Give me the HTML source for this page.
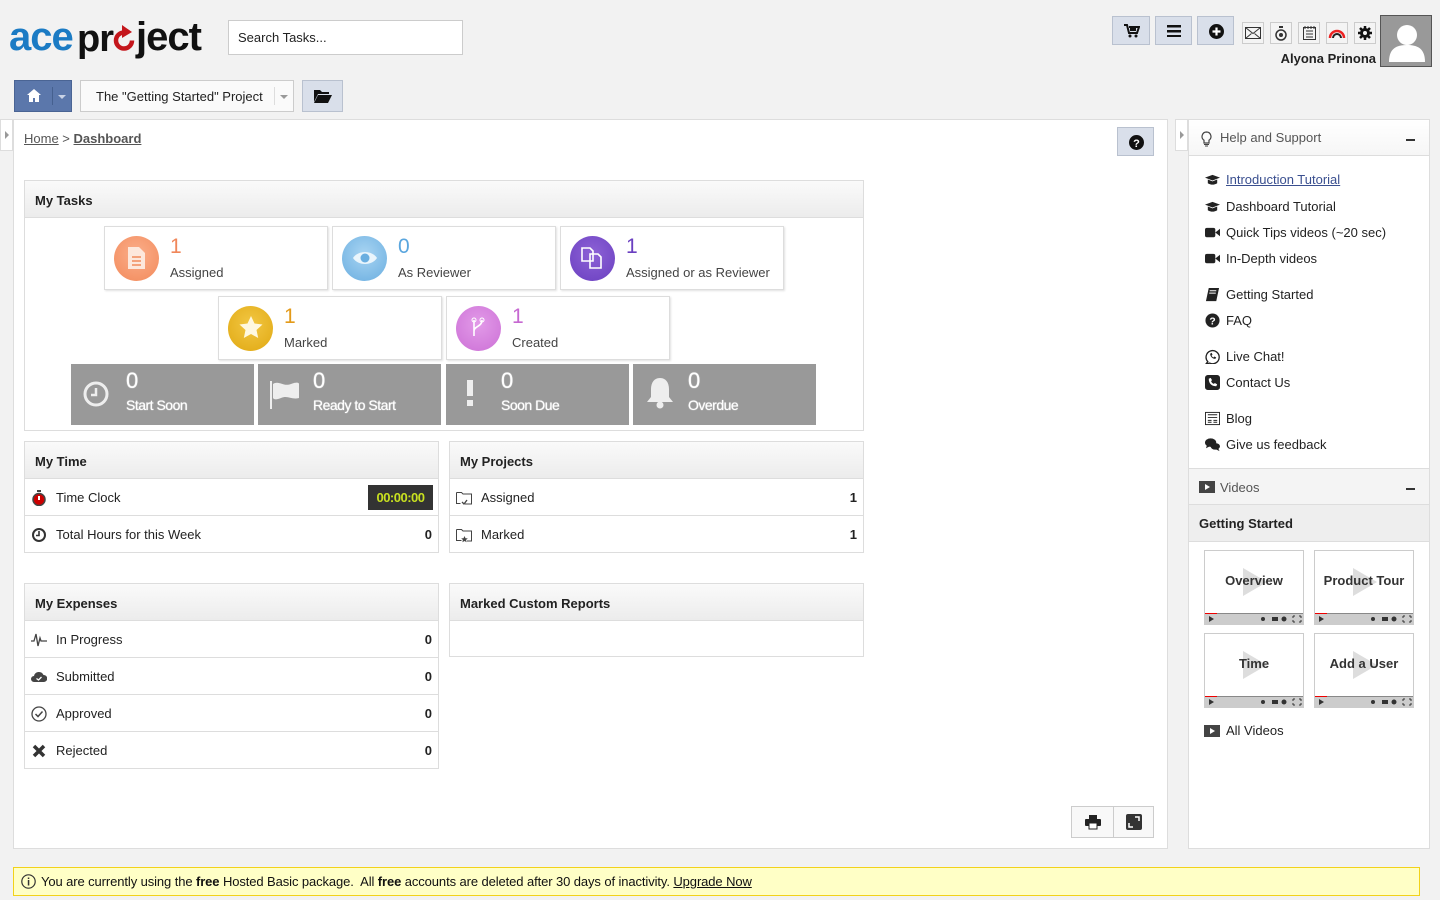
<!DOCTYPE html>
<html><head><meta charset="utf-8">
<style>
*{box-sizing:border-box;margin:0;padding:0}
body{width:1440px;height:900px;background:#f2f2f2;font-family:"Liberation Sans",Arial,sans-serif;font-size:13px;color:#222;position:relative;overflow:hidden}
.a{position:absolute}
.btn{position:absolute;background:#d9dfea;border:1px solid #b9c1cf}
.ib{position:absolute;background:#f4f4f4;border:1px solid #ccc;width:22px;height:22px;display:flex;align-items:center;justify-content:center}
.panel{position:absolute;background:#fff;border:1px solid #ddd}
.ph{height:37px;background:linear-gradient(#fafafa,#ececec);border-bottom:1px solid #ddd;font-weight:bold;font-size:13px;padding:12px 10px;color:#222}
.row{height:37px;border-bottom:1px solid #ddd;position:relative;display:flex;align-items:center;padding-left:31px}
.row:last-child{border-bottom:none}
.row .ic{position:absolute;left:6px;top:11px;width:16px;height:16px}
.row .v{position:absolute;right:6px;font-weight:bold}
.card{position:absolute;width:224px;height:64px;background:#fff;border:1px solid #ddd;box-shadow:1px 1px 2px rgba(0,0,0,.12)}
.card .c{position:absolute;left:9px;top:9px;width:45px;height:45px;border-radius:50%}
.card .n{position:absolute;left:65px;top:8px;font-size:21px}
.card .l{position:absolute;left:65px;top:38px;color:#444}
.gc{position:absolute;width:183px;height:61px;background:#999;color:#fff}
.gc .n{position:absolute;left:55px;top:4px;font-size:22px;text-shadow:0 0 1px #fff}
.gc .l{position:absolute;left:55px;top:33px;font-size:14px;letter-spacing:-.5px;text-shadow:0 0 1px #fff}
.hl{position:absolute;left:16px;display:flex;align-items:center;gap:6px}
.hl svg{width:15px;height:15px}
.vid{position:absolute;width:100px;height:75px;border:1px solid #ccc;background:#fff}
.vid .t{position:absolute;left:0;right:0;top:22px;text-align:center;font-weight:bold;font-size:13px;color:#333}
.vid .pl{position:absolute;left:38px;top:17px;width:0;height:0;border-left:24px solid #ddd;border-top:14px solid transparent;border-bottom:14px solid transparent}
.vid .bar{position:absolute;left:0;right:0;bottom:0;height:11px;background:#ccc;border-top:1px solid #888}
.vid .bar:before{content:"";position:absolute;left:0;top:-1px;width:12px;height:1px;background:#e00}
.vid .bar svg{position:absolute;left:0;top:0}
.lg{position:absolute;font-weight:bold;line-height:48px;letter-spacing:-1px}
</style></head><body>

<!-- logo -->
<div class="lg" style="left:9px;top:13px;font-size:40px;color:#1b7bc4">ace</div>
<div class="lg" style="left:77px;top:15px;font-size:38px;color:#111">pr</div>
<svg class="a" style="left:111px;top:20px" width="28" height="32" viewBox="0 0 28 32"><path d="M13 12.5A8 8 0 1 0 21 20.5" fill="none" stroke="#c4161c" stroke-width="4.5"/><path d="M11 5l10 7-10 6z" fill="#c4161c"/></svg>
<div class="lg" style="left:136px;top:13px;font-size:40px;color:#111">ject</div>

<div class="a" style="left:228px;top:20px;width:235px;height:35px;background:#fff;border:1px solid #ccc;padding:9px 9px;font-size:13px;color:#222">Search Tasks...</div>

<!-- top right -->
<div class="btn" style="left:1112px;top:16px;width:38px;height:29px"><svg class="a" style="left:11px;top:7px" width="16" height="14" viewBox="0 0 16 14"><path d="M0 1h3l2 8h8l2-6H5" fill="none" stroke="#111" stroke-width="2"/><rect x="6" y="3" width="6" height="4" fill="#111"/><circle cx="6" cy="12" r="1.5" fill="#111"/><circle cx="12" cy="12" r="1.5" fill="#111"/></svg></div>
<div class="btn" style="left:1155px;top:16px;width:37px;height:29px"><svg class="a" style="left:11px;top:8px" width="14" height="12"><rect y="0" width="14" height="2.5" fill="#111"/><rect y="5" width="14" height="2.5" fill="#111"/><rect y="10" width="14" height="2.5" fill="#111"/></svg></div>
<div class="btn" style="left:1197px;top:16px;width:37px;height:29px"><svg class="a" style="left:11px;top:7px" width="15" height="15"><circle cx="7.5" cy="7.5" r="7.5" fill="#111"/><path d="M7.5 3.5v8M3.5 7.5h8" stroke="#fff" stroke-width="2.2"/></svg></div>
<div class="ib" style="left:1242px;top:22px"><svg width="16" height="12"><rect x=".5" y=".5" width="15" height="11" fill="none" stroke="#333"/><path d="M.5 .5l7.5 6 7.5-6M.5 11.5l6-5M15.5 11.5l-6-5" fill="none" stroke="#333"/></svg></div>
<div class="ib" style="left:1270px;top:22px"><svg width="12" height="15"><circle cx="6" cy="9" r="5" fill="none" stroke="#333" stroke-width="1.5"/><rect x="4" y="0" width="4" height="2" fill="#333"/><circle cx="6" cy="9" r="2" fill="#333"/></svg></div>
<div class="ib" style="left:1298px;top:22px"><svg width="13" height="14"><rect x=".5" y="1.5" width="12" height="12" fill="none" stroke="#333"/><path d="M3 5h7M3 8h7M3 11h7M2 0v3M5 0v3M8 0v3M11 0v3" stroke="#333"/></svg></div>
<div class="ib" style="left:1326px;top:22px"><svg width="18" height="10"><path d="M2 10a7 7 0 0 1 14 0" fill="none" stroke="#e22" stroke-width="2.5"/><path d="M5 10a4 4 0 0 1 8 0" fill="none" stroke="#222" stroke-width="2"/></svg></div>
<div class="ib" style="left:1354px;top:22px"><svg width="14" height="14" viewBox="0 0 14 14"><circle cx="7" cy="7" r="5" fill="#111"/><path d="M7 0v14M0 7h14M2 2l10 10M12 2L2 12" stroke="#111" stroke-width="2.5"/><circle cx="7" cy="7" r="2" fill="#f4f4f4"/></svg></div>
<div class="a" style="left:1380px;top:15px;width:52px;height:52px;background:#999;border:1px solid #555;overflow:hidden"><svg width="52" height="52"><circle cx="26" cy="19" r="10" fill="#fff"/><path d="M8 46c0-14 8-17 18-17s18 3 18 17z" fill="#fff"/></svg></div>
<div class="a" style="left:1240px;top:51px;width:136px;text-align:right;font-weight:bold;font-size:13px">Alyona Prinona</div>

<!-- nav row -->
<div class="a" style="left:14px;top:80px;width:58px;height:32px;background:#5b77ab;border:1px solid #4a6494"><svg class="a" style="left:12px;top:8px" width="14" height="13"><path d="M7 0L0 6h2v7h4V9h2v4h4V6h2z" fill="#fff"/></svg><div class="a" style="left:37px;top:6px;width:1px;height:18px;background:#45608f"></div><div class="a" style="left:43px;top:14px;border-left:4px solid transparent;border-right:4px solid transparent;border-top:4px solid #c9d3e6"></div></div>
<div class="a" style="left:80px;top:80px;width:214px;height:32px;background:#fafafa;border:1px solid #ccc;padding:8px 15px">The "Getting Started" Project<div class="a" style="left:193px;top:6px;width:1px;height:18px;background:#ddd"></div><div class="a" style="left:199px;top:14px;border-left:4px solid transparent;border-right:4px solid transparent;border-top:4px solid #999"></div></div>
<div class="btn" style="left:302px;top:80px;width:41px;height:32px"><svg class="a" style="left:11px;top:9px" width="18" height="13"><path d="M0 0h6l2 2h7v2H4L0 12z" fill="#111"/><path d="M4 5h14l-4 8H0z" fill="#111"/></svg></div>

<!-- side strips -->
<div class="a" style="left:0;top:119px;width:13px;height:32px;background:#fff;border:1px solid #ddd"><div class="a" style="left:4px;top:11px;border-top:4px solid transparent;border-bottom:4px solid transparent;border-left:4px solid #999"></div></div>
<div class="a" style="left:1175px;top:119px;width:13px;height:32px;background:#fff;border:1px solid #ddd"><div class="a" style="left:4px;top:11px;border-top:4px solid transparent;border-bottom:4px solid transparent;border-left:4px solid #999"></div></div>

<!-- main panel -->
<div class="a" style="left:13px;top:119px;width:1155px;height:730px;background:#fff;border:1px solid #ddd"></div>
<div class="a" style="left:24px;top:131px;color:#555"><u>Home</u> &gt; <u style="font-weight:bold">Dashboard</u></div>
<div class="btn" style="left:1117px;top:127px;width:37px;height:29px"><svg class="a" style="left:11px;top:7px" width="15" height="15"><circle cx="7.5" cy="7.5" r="7.5" fill="#111"/><text x="7.5" y="12" text-anchor="middle" fill="#fff" font-size="11" font-weight="bold" font-family="Liberation Sans">?</text></svg></div>

<!-- My Tasks -->
<div class="panel" style="left:24px;top:180px;width:840px;height:251px"><div class="ph">My Tasks</div></div>
<div class="card" style="left:104px;top:226px"><div class="c" style="background:radial-gradient(circle at 50% 40%,#fbae8a,#f28a5b)"><svg class="a" style="left:14px;top:11px" width="17" height="22"><path d="M0 0h11l6 6v16H0z" fill="#fde8dc"/><path d="M4 10h9M4 14h9M4 18h9" stroke="#f28a5b" stroke-width="1.5"/></svg></div><div class="n" style="color:#f0875a">1</div><div class="l">Assigned</div></div>
<div class="card" style="left:332px;top:226px"><div class="c" style="background:radial-gradient(circle at 50% 40%,#a8d4f2,#6aaee0)"><svg class="a" style="left:10px;top:14px" width="26" height="16"><path d="M1 8C6 0 20 0 25 8 20 16 6 16 1 8z" fill="#eaf5fc"/><circle cx="13" cy="8" r="4.5" fill="#6aaee0"/></svg></div><div class="n" style="color:#5aa6de">0</div><div class="l">As Reviewer</div></div>
<div class="card" style="left:560px;top:226px"><div class="c" style="background:radial-gradient(circle at 50% 40%,#8d62d6,#6a3fc0)"><svg class="a" style="left:11px;top:11px" width="22" height="22"><path d="M1 1h8l3 3v10H1z M9 7h8l3 3v11H9z" fill="none" stroke="#fff" stroke-width="1.6"/></svg></div><div class="n" style="color:#6a3fc0">1</div><div class="l">Assigned or as Reviewer</div></div>
<div class="card" style="left:218px;top:296px"><div class="c" style="background:radial-gradient(circle at 50% 40%,#f2c743,#e0a812)"><svg class="a" style="left:11px;top:10px" width="24" height="23" viewBox="0 0 24 23"><path d="M12 0l3.5 7.5 8 1-6 5.5 1.7 8L12 18l-7.2 4 1.7-8-6-5.5 8-1z" fill="#fff8e0"/></svg></div><div class="n" style="color:#e39a19">1</div><div class="l">Marked</div></div>
<div class="card" style="left:446px;top:296px"><div class="c" style="background:radial-gradient(circle at 50% 40%,#e29ae8,#cc70d6)"><svg class="a" style="left:14px;top:11px" width="16" height="22"><path d="M4 3v16M4 14c0-5 8-4 8-11" fill="none" stroke="#fff" stroke-width="1.6"/><circle cx="4" cy="3" r="2" fill="none" stroke="#fff"/><circle cx="12" cy="3" r="2" fill="none" stroke="#fff"/></svg></div><div class="n" style="color:#c668d1">1</div><div class="l">Created</div></div>
<div class="gc" style="left:71px;top:364px"><svg class="a" style="left:12px;top:17px" width="26" height="26"><circle cx="13" cy="13" r="11" fill="none" stroke="#eee" stroke-width="3"/><path d="M13 7v7h-5" fill="none" stroke="#eee" stroke-width="2.5"/></svg><div class="n">0</div><div class="l">Start Soon</div></div>
<div class="gc" style="left:258px;top:364px"><svg class="a" style="left:11px;top:15px" width="32" height="30"><path d="M2 2v28" stroke="#eee" stroke-width="2"/><path d="M4 5c6-4 10 3 18 0s8 0 8 0v14c-8 2-11-3-18 0s-8 0-8 0z" fill="#eee"/></svg><div class="n">0</div><div class="l">Ready to Start</div></div>
<div class="gc" style="left:446px;top:364px"><svg class="a" style="left:20px;top:16px" width="8" height="26"><rect x="1" y="0" width="6" height="16" fill="#eee"/><rect x="1" y="20" width="6" height="6" fill="#eee"/></svg><div class="n">0</div><div class="l">Soon Due</div></div>
<div class="gc" style="left:633px;top:364px"><svg class="a" style="left:13px;top:13px" width="28" height="32"><path d="M14 1c-6 0-9 5-9 11v8l-4 5h26l-4-5v-8c0-6-3-11-9-11z" fill="#eee"/><circle cx="14" cy="28" r="3.5" fill="#eee"/></svg><div class="n">0</div><div class="l">Overdue</div></div>

<!-- My Time -->
<div class="panel" style="left:24px;top:441px;width:415px;height:112px"><div class="ph">My Time</div>
<div class="row"><svg class="ic" viewBox="0 0 16 16"><circle cx="8" cy="9.5" r="6" fill="#c00" stroke="#444" stroke-width="1.5"/><rect x="6" y="0" width="4" height="2" fill="#444"/><path d="M8 6v4" stroke="#fff" stroke-width="2"/></svg>Time Clock<div class="a" style="right:5px;top:6px;width:65px;height:25px;background:#333;color:#c8e020;font-weight:bold;font-size:13px;display:flex;align-items:center;justify-content:center;letter-spacing:-.5px">00:00:00</div></div>
<div class="row"><svg class="ic" viewBox="0 0 16 16"><circle cx="8" cy="8" r="6" fill="none" stroke="#333" stroke-width="2"/><path d="M8 4v4.5h-3" fill="none" stroke="#333" stroke-width="1.6"/></svg>Total Hours for this Week<span class="v">0</span></div></div>

<!-- My Projects -->
<div class="panel" style="left:449px;top:441px;width:415px;height:112px"><div class="ph">My Projects</div>
<div class="row"><svg class="ic" viewBox="0 0 16 16"><path d="M.5 2.5h5l1.5 1.5h8.5v10H9M.5 2.5v11h4" fill="none" stroke="#444"/><path d="M6 12l2 2 3-4" fill="none" stroke="#444" stroke-width="1.3"/></svg>Assigned<span class="v">1</span></div>
<div class="row"><svg class="ic" viewBox="0 0 16 16"><path d="M.5 2.5h5l1.5 1.5h8.5v10H11M.5 2.5v11h5" fill="none" stroke="#444"/><path d="M8.5 9l1 2.2 2.3.2-1.7 1.5.5 2.3-2.1-1.2-2.1 1.2.5-2.3-1.7-1.5 2.3-.2z" fill="#444"/></svg>Marked<span class="v">1</span></div></div>

<!-- My Expenses -->
<div class="panel" style="left:24px;top:583px;width:415px;height:186px"><div class="ph">My Expenses</div>
<div class="row"><svg class="ic" viewBox="0 0 16 16"><path d="M0 9h3l2-7 2 12 2-8 1 3h6" fill="none" stroke="#444" stroke-width="1.3"/></svg>In Progress<span class="v">0</span></div>
<div class="row"><svg class="ic" viewBox="0 0 16 16"><path d="M3 13a3 3 0 0 1 0-6 5 5 0 0 1 9.5-1A3.5 3.5 0 0 1 13 13z" fill="#444"/><path d="M5.5 9.5l2 1.5 3-3" fill="none" stroke="#fff" stroke-width="1.3"/></svg>Submitted<span class="v">0</span></div>
<div class="row"><svg class="ic" viewBox="0 0 16 16"><circle cx="8" cy="8" r="7" fill="none" stroke="#444" stroke-width="1.3"/><path d="M4.5 8l2.5 2.5 4.5-5" fill="none" stroke="#444" stroke-width="1.5"/></svg>Approved<span class="v">0</span></div>
<div class="row"><svg class="ic" viewBox="0 0 16 16"><path d="M3 3l10 10M13 3L3 13" stroke="#333" stroke-width="3.5"/></svg>Rejected<span class="v">0</span></div></div>

<!-- Marked Custom Reports -->
<div class="panel" style="left:449px;top:583px;width:415px;height:74px"><div class="ph">Marked Custom Reports</div></div>

<!-- print/expand -->
<div class="a" style="left:1071px;top:806px;width:83px;height:32px;background:#f8f8f8;border:1px solid #ccc"><div class="a" style="left:41px;top:0;width:1px;height:30px;background:#ccc"></div>
<svg class="a" style="left:13px;top:8px" width="16" height="15"><rect x="4" y="0" width="8" height="4" fill="#222"/><rect x="0" y="4" width="16" height="7" rx="1" fill="#222"/><rect x="4" y="8" width="8" height="6" fill="#fff" stroke="#222"/></svg>
<svg class="a" style="left:54px;top:7px" width="16" height="16"><rect width="16" height="16" rx="2" fill="#333"/><path d="M9 3h4v4M7 13H3V9" fill="none" stroke="#fff" stroke-width="1.5"/></svg></div>

<!-- right sidebar -->
<div class="a" style="left:1188px;top:119px;width:242px;height:730px;background:#fff;border:1px solid #ddd"></div>
<div class="a" style="left:1189px;top:120px;width:240px;height:36px;border-bottom:1px solid #ddd;background:linear-gradient(#fff,#f6f6f6)">
<svg class="a" style="left:12px;top:11px" width="11" height="16"><path d="M5.5 1a4.5 4.5 0 0 0-2.5 8.2V12h5V9.2A4.5 4.5 0 0 0 5.5 1z" fill="none" stroke="#444" stroke-width="1.2"/><path d="M3 13.5h5M4 15h3" stroke="#444"/></svg>
<div class="a" style="left:31px;top:10px;color:#555">Help and Support</div><div class="a" style="left:217px;top:19px;width:9px;height:2px;background:#333"></div></div>

<div class="a" style="left:1189px;top:120px;width:240px">
<div class="hl" style="top:52px"><svg viewBox="0 0 16 16"><path d="M0 6l8-3 8 3-8 3z" fill="#222"/><path d="M3 8v4c3 2 7 2 10 0V8l-5 2z" fill="#222"/></svg><u style="color:#3a4f8f">Introduction Tutorial</u></div>
<div class="hl" style="top:79px"><svg viewBox="0 0 16 16"><path d="M0 6l8-3 8 3-8 3z" fill="#222"/><path d="M3 8v4c3 2 7 2 10 0V8l-5 2z" fill="#222"/></svg>Dashboard Tutorial</div>
<div class="hl" style="top:105px"><svg viewBox="0 0 16 16"><rect x="0" y="3" width="11" height="10" rx="2" fill="#222"/><path d="M11 8l5-4v8z" fill="#222"/></svg>Quick Tips videos (~20 sec)</div>
<div class="hl" style="top:131px"><svg viewBox="0 0 16 16"><rect x="0" y="3" width="11" height="10" rx="2" fill="#222"/><path d="M11 8l5-4v8z" fill="#222"/></svg>In-Depth videos</div>
<div class="hl" style="top:167px"><svg viewBox="0 0 16 16"><path d="M4 1h11l-3 14H1z" fill="#222"/><path d="M5 4h7M4.5 6.5h7" stroke="#fff"/></svg>Getting Started</div>
<div class="hl" style="top:193px"><svg viewBox="0 0 16 16"><circle cx="8" cy="8" r="7.5" fill="#222"/><text x="8" y="12.5" text-anchor="middle" fill="#fff" font-size="11" font-weight="bold" font-family="Liberation Sans">?</text></svg>FAQ</div>
<div class="hl" style="top:229px"><svg viewBox="0 0 16 16"><path d="M3 13.5A7 7 0 1 1 5 15l-4 1z" fill="none" stroke="#222" stroke-width="1.4"/><path d="M5.5 5c0 3 2.5 5.5 5.5 5.5l1-1.5-2-1-1 1c-1-.5-1.5-1-2-2l1-1-1-2z" fill="#222"/></svg>Live Chat!</div>
<div class="hl" style="top:255px"><svg viewBox="0 0 16 16"><rect width="16" height="16" rx="3" fill="#222"/><path d="M4 4c0 5 3 8 8 8l1-2-2.5-1.5-1 1c-1.5-.5-2.5-1.5-3-3l1-1L6 3z" fill="#fff"/></svg>Contact Us</div>
<div class="hl" style="top:291px"><svg viewBox="0 0 16 16"><rect x=".5" y="1.5" width="15" height="13" fill="none" stroke="#222"/><path d="M3 4h10M3 7h10M3 10h4M3 12h4M9 10h4M9 12h4" stroke="#222"/></svg>Blog</div>
<div class="hl" style="top:317px"><svg viewBox="0 0 16 16"><ellipse cx="6" cy="6" rx="6" ry="4.5" fill="#222"/><ellipse cx="11" cy="10" rx="5" ry="3.5" fill="#222"/><path d="M2 9l-1 3 4-2zM14 12l1.5 3-4-2z" fill="#222"/></svg>Give us feedback</div>
</div>

<div class="a" style="left:1189px;top:468px;width:240px;height:37px;background:#f4f4f4;border-top:1px solid #ddd;border-bottom:1px solid #ddd">
<svg class="a" style="left:10px;top:12px" width="16" height="12"><rect width="16" height="12" fill="#444"/><path d="M6 3l5 3-5 3z" fill="#fff"/></svg>
<div class="a" style="left:31px;top:11px;color:#555">Videos</div><div class="a" style="left:217px;top:19px;width:9px;height:2px;background:#333"></div></div>
<div class="a" style="left:1189px;top:505px;width:240px;height:37px;background:#eee;border-bottom:1px solid #ddd;font-weight:bold;padding:11px 10px">Getting Started</div>

<div class="vid" style="left:1204px;top:550px"><div class="pl"></div><div class="t">Overview</div><div class="bar"><svg width="98" height="10"><path d="M4 2l5 3-5 3z" fill="#333"/><circle cx="58" cy="5" r="2" fill="#333"/><rect x="67" y="3" width="6" height="4" fill="#333"/><circle cx="79" cy="5" r="2.5" fill="#333"/><path d="M88 2h2M88 2v2M96 2h-2M96 2v2M88 8h2M88 8v-2M96 8h-2M96 8v-2" stroke="#333"/></svg></div></div>
<div class="vid" style="left:1314px;top:550px"><div class="pl"></div><div class="t">Product Tour</div><div class="bar"><svg width="98" height="10"><path d="M4 2l5 3-5 3z" fill="#333"/><circle cx="58" cy="5" r="2" fill="#333"/><rect x="67" y="3" width="6" height="4" fill="#333"/><circle cx="79" cy="5" r="2.5" fill="#333"/><path d="M88 2h2M88 2v2M96 2h-2M96 2v2M88 8h2M88 8v-2M96 8h-2M96 8v-2" stroke="#333"/></svg></div></div>
<div class="vid" style="left:1204px;top:633px"><div class="pl"></div><div class="t">Time</div><div class="bar"><svg width="98" height="10"><path d="M4 2l5 3-5 3z" fill="#333"/><circle cx="58" cy="5" r="2" fill="#333"/><rect x="67" y="3" width="6" height="4" fill="#333"/><circle cx="79" cy="5" r="2.5" fill="#333"/><path d="M88 2h2M88 2v2M96 2h-2M96 2v2M88 8h2M88 8v-2M96 8h-2M96 8v-2" stroke="#333"/></svg></div></div>
<div class="vid" style="left:1314px;top:633px"><div class="pl"></div><div class="t">Add a User</div><div class="bar"><svg width="98" height="10"><path d="M4 2l5 3-5 3z" fill="#333"/><circle cx="58" cy="5" r="2" fill="#333"/><rect x="67" y="3" width="6" height="4" fill="#333"/><circle cx="79" cy="5" r="2.5" fill="#333"/><path d="M88 2h2M88 2v2M96 2h-2M96 2v2M88 8h2M88 8v-2M96 8h-2M96 8v-2" stroke="#333"/></svg></div></div>
<div class="a" style="left:1204px;top:723px;display:flex;align-items:center;gap:6px"><svg width="16" height="12"><rect width="16" height="12" fill="#444"/><path d="M6 3l5 3-5 3z" fill="#fff"/></svg>All Videos</div>

<!-- footer -->
<div class="a" style="left:13px;top:867px;width:1407px;height:29px;background:#ffffc6;border:1px solid #f2d21a;padding:6px 0 0 27px;font-size:13px;color:#111;letter-spacing:-.1px">
<svg class="a" style="left:7px;top:6px" width="15" height="15"><circle cx="7.5" cy="7.5" r="6.7" fill="none" stroke="#333" stroke-width="1.2"/><rect x="6.8" y="6" width="1.5" height="5.5" fill="#333"/><rect x="6.8" y="3.5" width="1.5" height="1.5" fill="#333"/></svg>
You are currently using the <b>free</b> Hosted Basic package.&nbsp; All <b>free</b> accounts are deleted after 30 days of inactivity. <u>Upgrade Now</u></div>

</body></html>
